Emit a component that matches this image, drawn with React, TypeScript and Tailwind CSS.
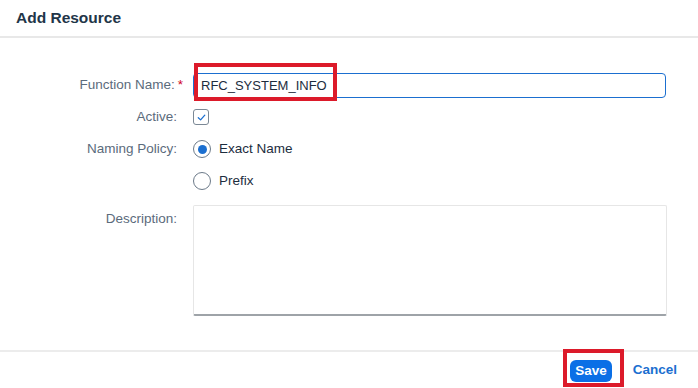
import { useState } from 'react'

// Add Resource dialog
function App() {
  const [name, setName] = useState('RFC_SYSTEM_INFO')
  const [active, setActive] = useState(true)
  const [policy, setPolicy] = useState<'exact' | 'prefix'>('exact')

  const font = { fontFamily: '"Liberation Sans", Arial, sans-serif' }

  return (
    <div className="w-[698px] h-[388px] bg-white flex flex-col text-[#32363a]" style={font}>
      {/* header */}
      <div className="h-[38px] shrink-0 border-b-2 border-[#e8e8e8] flex items-center px-4">
        <h1 className="text-[15.5px] font-bold text-[#223548]">Add Resource</h1>
      </div>

      {/* form */}
      <div className="flex-1 pt-[31px]">
        <div className="grid grid-cols-[177px_1fr] gap-x-[15px]">
          <div className="h-8 flex items-center justify-end text-[13.5px] text-[#5b6b7c] pr-[4px]">
            Function Name:<span className="text-[#d0021b] ml-[3px] mr-[-10px]">*</span>
          </div>
          <div className="h-8 flex items-center pr-[32px]">
            <div className="relative flex-1 ml-[1px]">
              <input
                value={name}
                onChange={e => setName(e.target.value)}
                className="w-full h-[25px] border-[1.5px] border-[#1b6fd0] rounded-[4px] px-[7px] text-[13px] text-[#1d2d3e] outline-none"
              />
              <div className="absolute left-[1px] top-[-10px] w-[143px] h-[38px] border-4 border-[#dc1a2a] pointer-events-none" />
            </div>
          </div>

          <div className="h-8 flex items-center justify-end text-[13.5px] text-[#5b6b7c]">Active:</div>
          <div className="h-8 flex items-center">
            <button
              onClick={() => setActive(!active)}
              className="w-[16px] h-[16px] ml-[1px] rounded-[3px] border border-[#7b8895] flex items-center justify-center"
            >
              {active && (
                <svg width="11" height="11" viewBox="0 0 12 12">
                  <path d="M2.5 6.3 L5 8.6 L9.6 3.4" fill="none" stroke="#1b6fd0" strokeWidth="1.4" strokeLinecap="round" strokeLinejoin="round" />
                </svg>
              )}
            </button>
          </div>

          <div className="h-8 flex items-center justify-end text-[13.5px] text-[#5b6b7c]">Naming Policy:</div>
          <div className="h-8 flex items-center gap-[8px] text-[13.5px] text-[#1d2d3e]" onClick={() => setPolicy('exact')}>
            <span className="w-[18px] h-[18px] ml-[1px] rounded-full border-[1.5px] border-[#6c7a89] flex items-center justify-center">
              {policy === 'exact' && <span className="w-[9px] h-[9px] rounded-full bg-[#1b6fd0]" />}
            </span>
            Exact Name
          </div>

          <div className="h-8" />
          <div className="h-8 flex items-center gap-[8px] text-[13.5px] text-[#1d2d3e]" onClick={() => setPolicy('prefix')}>
            <span className="w-[18px] h-[18px] ml-[1px] rounded-full border-[1.5px] border-[#6c7a89] flex items-center justify-center">
              {policy === 'prefix' && <span className="w-[9px] h-[9px] rounded-full bg-[#1b6fd0]" />}
            </span>
            Prefix
          </div>

          <div className="pt-[4px] mt-[8px] flex justify-end text-[13.5px] text-[#5b6b7c]">Description:</div>
          <div className="mt-[8px] pr-[32px]">
            <textarea className="w-full h-[111px] ml-[1px] border border-[#e6e6e6] border-b-2 border-b-[#9ea3a8] rounded-[2px] resize-none outline-none" />
          </div>
        </div>
      </div>

      {/* footer */}
      <div className="h-[38px] shrink-0 border-t-2 border-[#ececec] flex items-center justify-end gap-[21px] pr-[21px]">
        <div className="relative">
          <button className="h-[22px] px-[5px] rounded-[6px] bg-[#0b6fe6] text-white text-[13.5px] font-bold">Save</button>
          <div className="absolute left-[-7px] top-[-9px] w-[61px] h-[38px] border-4 border-[#dc1a2a] pointer-events-none" />
        </div>
        <button className="text-[13.5px] font-bold text-[#1b6fd0]">Cancel</button>
      </div>
    </div>
  )
}

export default App
